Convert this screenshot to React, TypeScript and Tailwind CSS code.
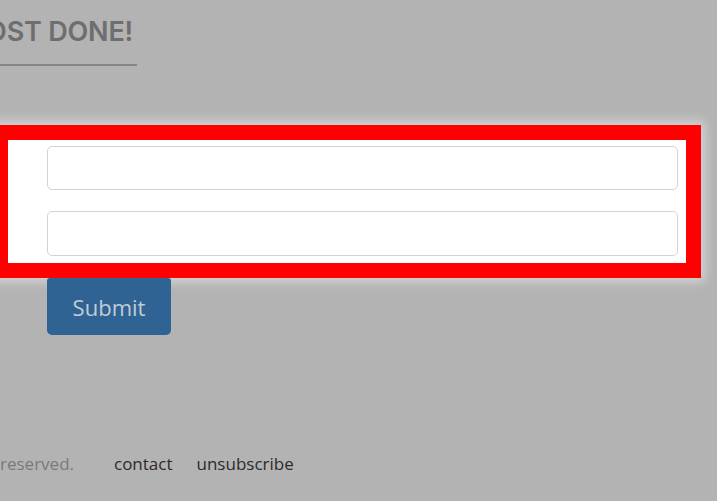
export default function App() {
  return (
    <div className="min-h-[501px] w-[717px] overflow-hidden bg-[#b3b3b3] font-['Open_Sans',sans-serif]">
      {/* Heading, cut off at the left edge */}
      <div className="pt-[15px]">
        <div className="flex w-[137px] justify-end overflow-hidden whitespace-nowrap pr-[4px]">
          <h1 className="font-['Inter',sans-serif] text-[27px] font-semibold leading-[34px] tracking-[-0.2px] text-[#6e6e6e]">
            ALMOST DONE!
          </h1>
        </div>
        <div className="mt-[15px] h-[2px] w-[137px] bg-[#858585]" />
      </div>

      {/* Highlighted form fields */}
      <div className="ml-[-7px] mt-[59px] w-[708px] border-[15px] border-[#ff0000] bg-white pb-[7px] pl-[39px] pr-[8px] pt-[6px] shadow-[0_0_10px_4px_rgba(220,220,220,0.8)]">
        <div className="flex flex-col gap-[21px]">
          <input
            type="text"
            className="h-[44px] w-full rounded-[5px] border border-[#d4d4d4] bg-white px-3 outline-none"
          />
          <input
            type="text"
            className="h-[45px] w-full rounded-[5px] border border-[#d4d4d4] bg-white px-3 outline-none"
          />
        </div>
      </div>

      <div className="pl-[47px]">
        <button className="h-[57px] w-[124px] rounded-b-[5px] rounded-t-[3px] bg-[#2f6393] text-[22px] leading-none text-[#c0ccd8]">
          Submit
        </button>
      </div>

      {/* Footer */}
      <div className="mt-[117px] flex items-center whitespace-nowrap text-[17px] leading-[24px]">
        <div className="flex w-[74px] justify-end overflow-hidden">
          <span className="text-[#7a7a7a]">All rights reserved.</span>
        </div>
        <a className="ml-[40px] text-[#2b2b2b]">contact</a>
        <a className="ml-[24px] text-[#2b2b2b]">unsubscribe</a>
      </div>
    </div>
  );
}
